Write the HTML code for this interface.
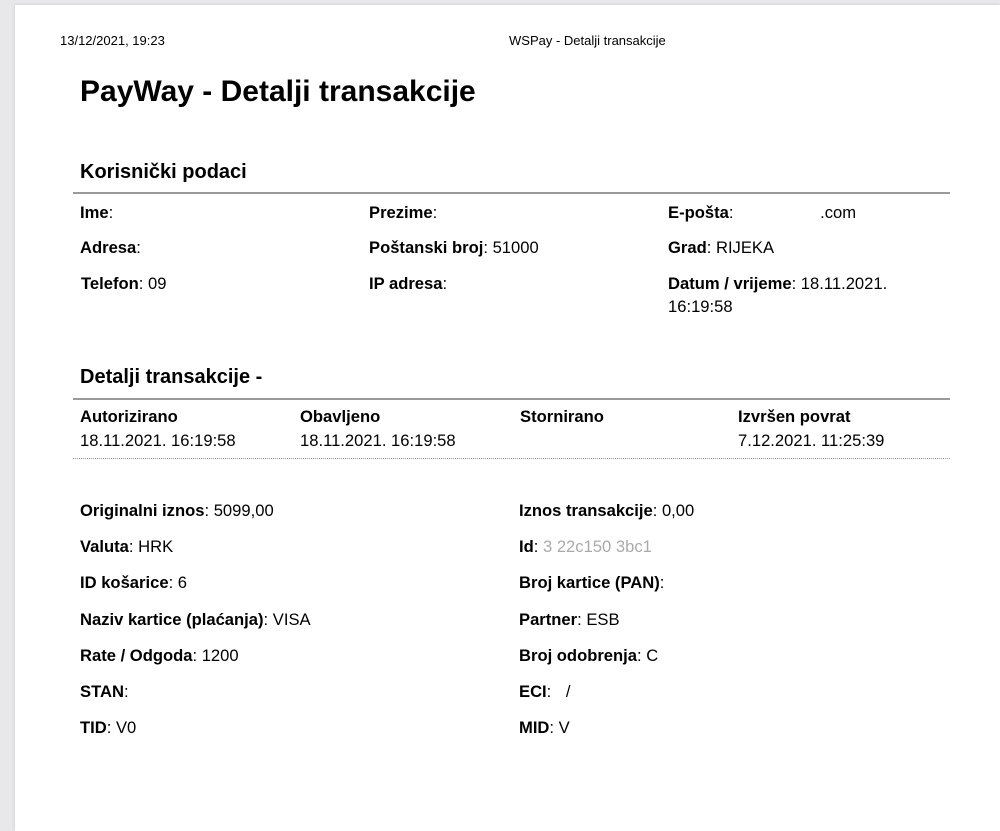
<!DOCTYPE html>
<html><head><meta charset="utf-8"><style>
html,body{margin:0;padding:0;}
body{width:1000px;height:831px;background:#e8e8ea;position:relative;overflow:hidden;font-family:"Liberation Sans",Arial,sans-serif;color:#000;}
.paper{position:absolute;left:15px;top:5px;width:985px;height:826px;background:#fff;box-shadow:0 0 3px rgba(0,0,0,.15);}
.t{position:absolute;font-size:16.6px;line-height:19px;white-space:nowrap;}
b{font-weight:bold;}
.h2{position:absolute;font-size:20px;font-weight:bold;line-height:23px;white-space:nowrap;}
.line{position:absolute;left:73px;width:877px;height:2px;background:#9a9a9a;}
</style></head><body>
<div class="paper"></div>
<div class="t" style="left:60px;top:31px;font-size:13px;">13/12/2021, 19:23</div>
<div class="t" style="left:509px;top:31px;font-size:13px;">WSPay - Detalji transakcije</div>
<div style="position:absolute;left:80px;top:75px;font-size:30px;font-weight:bold;line-height:34px;">PayWay - Detalji transakcije</div>

<div class="h2" style="left:80px;top:161px;">Korisnički podaci</div>
<div class="line" style="top:192px;"></div>

<div class="t" style="left:80px;top:203px;"><b>Ime</b>:</div>
<div class="t" style="left:369px;top:203px;"><b>Prezime</b>:</div>
<div class="t" style="left:668px;top:203px;"><b>E-pošta</b>: <span style="margin-left:82px">.com</span></div>
<div class="t" style="left:80px;top:238px;"><b>Adresa</b>:</div>
<div class="t" style="left:369px;top:238px;"><b>Poštanski broj</b>: 51000</div>
<div class="t" style="left:668px;top:238px;"><b>Grad</b>: RIJEKA</div>
<div class="t" style="left:81px;top:274px;"><b>Telefon</b>: 09</div>
<div class="t" style="left:369px;top:274px;"><b>IP adresa</b>:</div>
<div class="t" style="left:668px;top:274px;"><b>Datum / vrijeme</b>: 18.11.2021.</div>
<div class="t" style="left:668px;top:297px;">16:19:58</div>

<div class="h2" style="left:80px;top:366px;">Detalji transakcije -</div>
<div class="line" style="top:398px;"></div>

<div class="t" style="left:80px;top:407px;"><b>Autorizirano</b></div>
<div class="t" style="left:80px;top:431px;">18.11.2021. 16:19:58</div>
<div class="t" style="left:300px;top:407px;"><b>Obavljeno</b></div>
<div class="t" style="left:300px;top:431px;">18.11.2021. 16:19:58</div>
<div class="t" style="left:520px;top:407px;"><b>Stornirano</b></div>
<div class="t" style="left:738px;top:407px;"><b>Izvršen povrat</b></div>
<div class="t" style="left:738px;top:431px;">7.12.2021. 11:25:39</div>
<div style="position:absolute;left:73px;top:458px;width:877px;border-top:1px dotted #999;"></div>

<div class="t" style="left:80px;top:501px;"><b>Originalni iznos</b>: 5099,00</div>
<div class="t" style="left:519px;top:501px;"><b>Iznos transakcije</b>: 0,00</div>
<div class="t" style="left:80px;top:537px;"><b>Valuta</b>: HRK</div>
<div class="t" style="left:519px;top:537px;"><b>Id</b>: <span style="color:#aaa">3 22c150 3bc1</span></div>
<div class="t" style="left:80px;top:573px;"><b>ID košarice</b>: 6</div>
<div class="t" style="left:519px;top:573px;"><b>Broj kartice (PAN)</b>:</div>
<div class="t" style="left:80px;top:610px;"><b>Naziv kartice (plaćanja)</b>: VISA</div>
<div class="t" style="left:519px;top:610px;"><b>Partner</b>: ESB</div>
<div class="t" style="left:80px;top:646px;"><b>Rate / Odgoda</b>: 1200</div>
<div class="t" style="left:519px;top:646px;"><b>Broj odobrenja</b>: C</div>
<div class="t" style="left:80px;top:682px;"><b>STAN</b>:</div>
<div class="t" style="left:519px;top:682px;"><b>ECI</b>: <span style="margin-left:10px">/</span></div>
<div class="t" style="left:80px;top:718px;"><b>TID</b>: V0</div>
<div class="t" style="left:519px;top:718px;"><b>MID</b>: V</div>
</body></html>
